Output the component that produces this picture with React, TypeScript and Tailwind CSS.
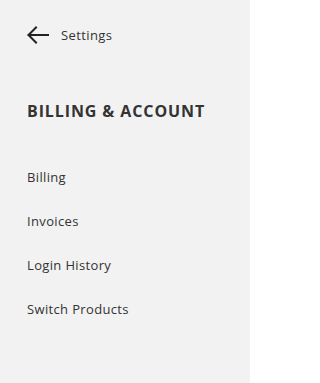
import React from "react";

export default function App() {
  const items = ["Billing", "Invoices", "Login History", "Switch Products"];
  return (
    <div
      className="w-[250px] h-[383px] bg-[#f2f2f2] text-[#333333] pl-[27px] pt-[26px] flex flex-col overflow-hidden"
      style={{ fontFamily: '"Open Sans", sans-serif' }}
    >
      <div className="flex items-center h-[18px] gap-[12px]">
        <svg width="22" height="18" viewBox="0 0 22 18" fill="none">
          <path d="M21 9H1.5M9 1.5L1.5 9L9 16.5" stroke="#222" strokeWidth="2" strokeLinecap="square" />
        </svg>
        <span className="text-[13px] leading-none tracking-[0.4px]">Settings</span>
      </div>
      <div className="mt-[59px] text-[16px] font-bold leading-none tracking-[0.9px]">BILLING &amp; ACCOUNT</div>
      <div className="mt-[51px] flex flex-col gap-[30px]">
        {items.map((t) => (
          <div key={t} className="text-[13px] leading-[14px] tracking-[0.35px]">{t}</div>
        ))}
      </div>
    </div>
  );
}
